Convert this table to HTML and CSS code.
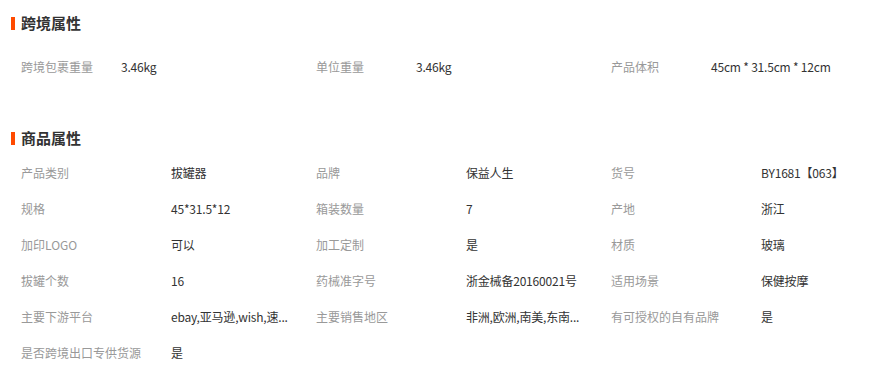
FILE: index.html
```html
<!DOCTYPE html>
<html lang="zh">
<head>
<meta charset="utf-8">
<link rel="stylesheet" href="styles.css">
</head>
<body>
<div class="attrs">
  <section class="block block-cross">
    <h3 class="title">跨境属性</h3>
    <div class="grid">
      <div class="cell"><span class="label">跨境包裹重量</span><span class="value">3.46kg</span></div>
      <div class="cell"><span class="label">单位重量</span><span class="value">3.46kg</span></div>
      <div class="cell"><span class="label">产品体积</span><span class="value">45cm * 31.5cm * 12cm</span></div>
    </div>
  </section>
  <section class="block block-goods">
    <h3 class="title">商品属性</h3>
    <div class="grid">
      <div class="cell"><span class="label">产品类别</span><span class="value">拔罐器</span></div>
      <div class="cell"><span class="label">品牌</span><span class="value">保益人生</span></div>
      <div class="cell"><span class="label">货号</span><span class="value">BY1681【063】</span></div>
      <div class="cell"><span class="label">规格</span><span class="value">45*31.5*12</span></div>
      <div class="cell"><span class="label">箱装数量</span><span class="value">7</span></div>
      <div class="cell"><span class="label">产地</span><span class="value">浙江</span></div>
      <div class="cell"><span class="label">加印LOGO</span><span class="value">可以</span></div>
      <div class="cell"><span class="label">加工定制</span><span class="value">是</span></div>
      <div class="cell"><span class="label">材质</span><span class="value">玻璃</span></div>
      <div class="cell"><span class="label">拔罐个数</span><span class="value">16</span></div>
      <div class="cell"><span class="label">药械准字号</span><span class="value">浙金械备20160021号</span></div>
      <div class="cell"><span class="label">适用场景</span><span class="value">保健按摩</span></div>
      <div class="cell"><span class="label">主要下游平台</span><span class="value">ebay,亚马逊,wish,速...</span></div>
      <div class="cell"><span class="label">主要销售地区</span><span class="value">非洲,欧洲,南美,东南...</span></div>
      <div class="cell"><span class="label">有可授权的自有品牌</span><span class="value">是</span></div>
      <div class="cell"><span class="label">是否跨境出口专供货源</span><span class="value">是</span></div>
    </div>
  </section>
</div>
</body>
</html>
```

FILE: styles.css
```css
html, body {
  margin: 0;
  padding: 0;
  background: #fff;
}
body {
  font-family: "Microsoft YaHei", "Noto Sans CJK SC", "Noto Sans", sans-serif;
  font-size: 12px;
  color: #333;
}
.attrs {
  width: 892px;
}
.block {
  margin: 0;
}
.block-cross {
  padding-top: 11px;
}
.block-goods {
  padding-top: 41px;
}
.title {
  margin: 0;
  padding-left: 21px;
  position: relative;
  height: 24px;
  line-height: 24px;
  font-size: 15px;
  font-weight: bold;
  color: #333;
}
.title::before {
  content: "";
  position: absolute;
  left: 11px;
  top: 6px;
  width: 4px;
  height: 13px;
  background: #ff4a00;
}
.grid {
  display: grid;
  grid-template-columns: 295px 295px 295px;
  padding-left: 21px;
}
.block-cross .grid {
  margin-top: 14px;
}
.block-goods .grid {
  margin-top: 5px;
}
.cell {
  display: flex;
  height: 36px;
  line-height: 36px;
  white-space: nowrap;
}
.label {
  color: #999;
  flex: none;
}
.block-cross .label {
  width: 100px;
}
.block-goods .label {
  width: 150px;
}
.value {
  color: #333;
  letter-spacing: -0.2px;
}
```
